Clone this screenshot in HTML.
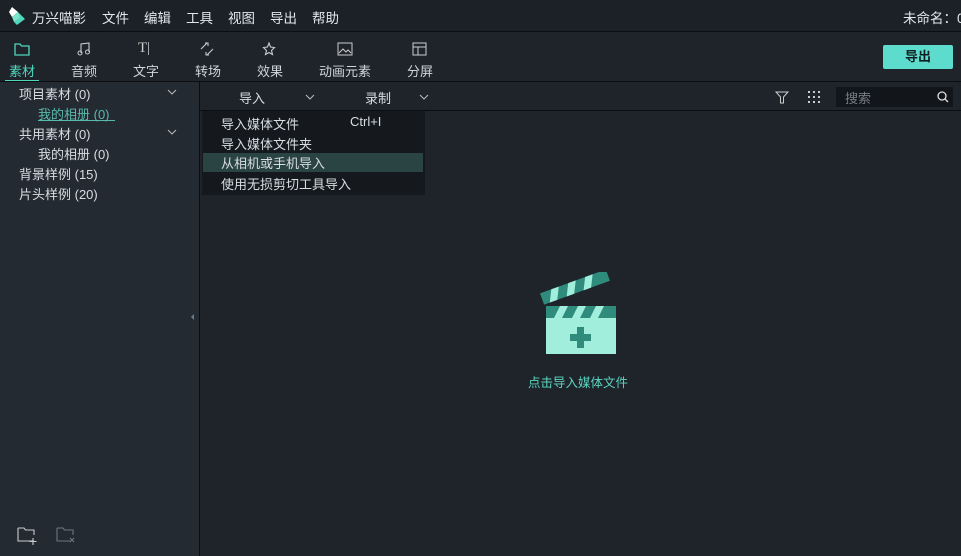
<!DOCTYPE html>
<html><head><meta charset="utf-8"><style>
*{margin:0;padding:0;box-sizing:border-box}
body{width:961px;height:556px;overflow:hidden;background:#1f242b;font-family:"Liberation Sans","Noto Sans CJK SC",sans-serif;color:#d8dde2;font-size:13px;position:relative}
.a{position:absolute;white-space:nowrap}
.line{position:absolute;background:#0b0d10}
.ic{position:absolute;top:42px}
.lab{position:absolute;top:61px;font-size:13px;color:#d0d5da;white-space:nowrap}
.m{position:absolute;top:7px;font-size:13.5px;color:#e3e6ea;white-space:nowrap}
</style></head><body>
<div class="a" style="left:0;top:0;width:961px;height:31px;background:#1c2027"></div>
<div class="line" style="left:0;top:31px;width:961px;height:1px"></div>
<svg class="a" style="left:9px;top:7px" width="16" height="18"><path d="M3 0 L9 5 L3 10 L0 5Z" fill="#fff"/><path d="M9 5 L16 12 L8 18 L5 15 L11 11 L6 7Z" fill="#4fd8bd"/><path d="M3 10 L9 5 L11 11 L5 15Z" fill="#7ee6cf"/></svg>
<div class="m" style="left:32px">万兴喵影</div>
<div class="m" style="left:102px">文件</div>
<div class="m" style="left:144px">编辑</div>
<div class="m" style="left:186px">工具</div>
<div class="m" style="left:228px">视图</div>
<div class="m" style="left:270px">导出</div>
<div class="m" style="left:312px">帮助</div>
<div class="m" style="left:903px">未命名：0</div>
<!-- toolbar -->
<svg class="ic" style="left:14px" width="16" height="14"><path d="M1 2h5l1.5 2H15v9H1z" fill="none" stroke="#4fd8bd" stroke-width="1.3"/></svg>
<svg class="ic" style="left:77px" width="14" height="14"><path d="M4 11V2l8-1v9" fill="none" stroke="#ccc" stroke-width="1.1"/><circle cx="3" cy="11" r="2" fill="none" stroke="#ccc"/><circle cx="10.5" cy="10" r="2" fill="none" stroke="#ccc"/></svg>
<div class="a" style="left:138px;top:40px;font-size:15px;color:#ccc;font-family:'Liberation Serif',serif">T|</div>
<svg class="ic" style="left:200px" width="14" height="14"><path d="M1 7l6-6M5 1h3v3M13 7l-6 6M9 13H6v-3" fill="none" stroke="#ccc" stroke-width="1.1"/></svg>
<svg class="ic" style="left:262px" width="14" height="14"><path d="M7 1l1.5 4 4 .5-3 3 1 4L7 10.5 3.5 12.5l1-4-3-3 4-.5z" fill="none" stroke="#ccc" stroke-width="1.1"/></svg>
<svg class="ic" style="left:337px" width="16" height="14"><rect x="1" y="1" width="14" height="12" fill="none" stroke="#ccc"/><path d="M2 11l4-4 3 3 2-2 3 3" fill="none" stroke="#ccc"/></svg>
<svg class="ic" style="left:412px" width="15" height="14"><rect x="1" y="1" width="13" height="12" fill="none" stroke="#ccc"/><path d="M1 5h13M6 5v8" stroke="#ccc"/></svg>
<div class="lab" style="left:9px;color:#4fd8bd">素材</div>
<div class="a" style="left:5px;top:80px;width:34px;height:2px;background:#4fd8bd"></div>
<div class="lab" style="left:71px">音频</div>
<div class="lab" style="left:133px">文字</div>
<div class="lab" style="left:195px">转场</div>
<div class="lab" style="left:257px">效果</div>
<div class="lab" style="left:319px">动画元素</div>
<div class="lab" style="left:407px">分屏</div>
<div class="a" style="left:883px;top:45px;width:70px;height:24px;background:#5ddccd;border-radius:2px;color:#102020;font-weight:bold;text-align:center;line-height:24px;font-size:13px">导出</div>
<div class="line" style="left:0;top:81px;width:961px;height:1px"></div>
<!-- left panel -->
<div class="a" style="left:0;top:82px;width:199px;height:474px;background:#232a32"></div>
<div class="line" style="left:199px;top:82px;width:1px;height:474px"></div>
<div class="a" style="left:19px;top:84px">项目素材 (0)</div>
<div class="a" style="left:38px;top:104px;color:#5ab9ad">我的相册 (0)</div>
<div class="a" style="left:38px;top:120px;width:77px;height:1px;background:#5ab9ad"></div>
<div class="a" style="left:19px;top:124px">共用素材 (0)</div>
<div class="a" style="left:38px;top:144px">我的相册 (0)</div>
<div class="a" style="left:19px;top:164px">背景样例 (15)</div>
<div class="a" style="left:19px;top:184px">片头样例 (20)</div>
<svg class="a" style="left:167px;top:89px" width="10" height="6"><path d="M1 1l4 4 4-4" fill="none" stroke="#bbb"/></svg>
<svg class="a" style="left:167px;top:129px" width="10" height="6"><path d="M1 1l4 4 4-4" fill="none" stroke="#bbb"/></svg>
<div class="a" style="left:191px;top:314px;width:0;height:0;border:3px solid transparent;border-right-color:#6a7a88;border-left:0"></div>
<svg class="a" style="left:17px;top:527px" width="22" height="18"><path d="M1 1h6l1.5 2H17v5M17 14H1V1" fill="none" stroke="#c8ccd0" stroke-width="1.1"/><path d="M16 11v7M12.5 14.5h7" stroke="#c8ccd0" stroke-width="1.1"/></svg>
<svg class="a" style="left:56px;top:527px" width="22" height="18"><path d="M1 1h6l1.5 2H17v5M14 14H1V1" fill="none" stroke="#6f767d" stroke-width="1.1"/><path d="M14 11l4 4M18 11l-4 4" stroke="#6f767d" stroke-width="1.1"/></svg>
<!-- sub toolbar -->
<div class="a" style="left:239px;top:88px">导入</div>
<svg class="a" style="left:305px;top:94px" width="10" height="6"><path d="M1 1l4 4 4-4" fill="none" stroke="#bbb"/></svg>
<div class="a" style="left:365px;top:88px">录制</div>
<svg class="a" style="left:419px;top:94px" width="10" height="6"><path d="M1 1l4 4 4-4" fill="none" stroke="#bbb"/></svg>
<svg class="a" style="left:775px;top:90px" width="14" height="14"><path d="M1 2h12L8.5 7v6h-3V7z" fill="none" stroke="#ccc"/></svg>
<svg class="a" style="left:807px;top:90px" width="14" height="14" fill="#ccc"><rect x="1" y="1" width="2" height="2"/><rect x="6" y="1" width="2" height="2"/><rect x="11" y="1" width="2" height="2"/><rect x="1" y="6" width="2" height="2"/><rect x="6" y="6" width="2" height="2"/><rect x="11" y="6" width="2" height="2"/><rect x="1" y="11" width="2" height="2"/><rect x="6" y="11" width="2" height="2"/><rect x="11" y="11" width="2" height="2"/></svg>
<div class="a" style="left:836px;top:87px;width:117px;height:20px;background:#121519"></div>
<div class="a" style="left:845px;top:88px;color:#777d84">搜索</div>
<svg class="a" style="left:937px;top:91px" width="12" height="12"><circle cx="5" cy="5" r="4" fill="none" stroke="#ddd" stroke-width="1.3"/><path d="M8 8l3 3" stroke="#ddd" stroke-width="1.3"/></svg>
<div class="line" style="left:200px;top:110px;width:761px;height:1px"></div>
<!-- menu -->
<div class="a" style="left:202px;top:111px;width:223px;height:84px;background:#15191e"></div>
<div class="a" style="left:203px;top:153px;width:220px;height:19px;background:#2a4343"></div>
<div class="a" style="left:221px;top:114px">导入媒体文件</div>
<div class="a" style="left:350px;top:114px">Ctrl+I</div>
<div class="a" style="left:221px;top:134px">导入媒体文件夹</div>
<div class="a" style="left:221px;top:153px">从相机或手机导入</div>
<div class="a" style="left:221px;top:174px">使用无损剪切工具导入</div>
<!-- clapper -->
<svg class="a" style="left:540px;top:272px" width="80" height="86">
<g transform="rotate(-20 6 32)"><rect x="4" y="20" width="70" height="12" fill="#2f8b7c"/><path d="M16 20h8l-6 12h-8zM34 20h8l-6 12h-8zM52 20h8l-6 12h-8z" fill="#a0eedb"/></g>
<circle cx="12" cy="40" r="3" fill="#a0eedb" stroke="#2f8b7c"/>
<rect x="6" y="34" width="70" height="12" fill="#2f8b7c"/>
<path d="M14 46l6-12h8l-6 12zM32 46l6-12h8l-6 12zM50 46l6-12h8l-6 12z" fill="#a0eedb"/>
<rect x="6" y="46" width="70" height="36" fill="#a0eedb"/>
<path d="M37 55h7v7h7v7h-7v7h-7v-7h-7v-7h7z" fill="#2f8b7c"/>
</svg>
<div class="a" style="left:528px;top:372px;color:#5cd5c1;font-size:12.5px">点击导入媒体文件</div>
</body></html>
